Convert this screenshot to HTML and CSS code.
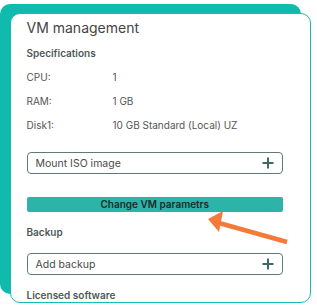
FILE: index.html
```html
<!DOCTYPE html>
<html>
<head>
<meta charset="utf-8">
<link rel="stylesheet" href="styles.css">
</head>
<body>
<div class="card">
  <h1 class="title">VM management</h1>
  <h2 class="section">Specifications</h2>
  <div class="specs">
    <div class="row"><span class="label">CPU:</span><span class="value">1</span></div>
    <div class="row"><span class="label">RAM:</span><span class="value">1 GB</span></div>
    <div class="row"><span class="label">Disk1:</span><span class="value">10 GB Standard (Local) UZ</span></div>
  </div>
  <div class="field iso"><span>Mount ISO image</span>
    <svg class="plus" width="12" height="12" viewBox="0 0 12 12"><path d="M6 0.5V11.5M0.5 6H11.5" stroke="#3f6a64" stroke-width="2" fill="none"/></svg>
  </div>
  <button class="btn">Change VM parametrs</button>
  <h2 class="section backup">Backup</h2>
  <div class="field"><span>Add backup</span>
    <svg class="plus" width="12" height="12" viewBox="0 0 12 12"><path d="M6 0.5V11.5M0.5 6H11.5" stroke="#3f6a64" stroke-width="2" fill="none"/></svg>
  </div>
  <h2 class="section licensed">Licensed software</h2>
</div>
<svg class="arrow" width="317" height="306" viewBox="0 0 317 306">
  <line x1="287" y1="242" x2="219" y2="223" stroke="#f47a3a" stroke-width="4.5"/>
  <polygon points="208,219 223,211 219,232" fill="#f47a3a"/>
</svg>
</body>
</html>
```
FILE: styles.css
```css
html, body {
  margin: 0;
  padding: 0;
  background: #ffffff;
}
body {
  width: 317px;
  height: 306px;
  overflow: hidden;
  position: relative;
  font-family: Inter, "Noto Sans", sans-serif;
}
.card {
  box-sizing: border-box;
  margin: 13px 0 0 10px;
  width: 301px;
  height: 290px;
  border: 1.5px solid #16bcae;
  border-radius: 10px;
  background: #ffffff;
  box-shadow: -10px -9px 0 0 #10bbad;
  padding: 3px 27px 0 15.5px;
  overflow: hidden;
}
.title {
  margin: 0;
  font-size: 14px;
  font-weight: 400;
  line-height: 22px;
  color: #444;
}
.section {
  margin: 0;
  font-size: 10px;
  font-weight: 600;
  line-height: 14px;
  color: #4d5957;
}
.title + .section {
  margin-top: 7px;
}
.specs {
  margin-top: 5px;
}
.row {
  display: flex;
  height: 24px;
  align-items: center;
  font-size: 10px;
  color: #555;
}
.label {
  width: 86px;
}
.field {
  box-sizing: border-box;
  display: flex;
  align-items: center;
  justify-content: space-between;
  height: 22px;
  border: 1px solid #5f7975;
  border-radius: 4px;
  padding: 0 8px 0 8px;
  font-size: 10.5px;
  color: #4a4a4a;
}
.iso {
  margin-top: 15px;
}
.plus {
  display: block;
}
.btn {
  display: block;
  box-sizing: border-box;
  width: 100%;
  height: 15px;
  margin-top: 23px;
  border: none;
  border-radius: 2px;
  background: #2bb4a7;
  font-family: Inter, "Noto Sans", sans-serif;
  font-size: 10px;
  font-weight: 600;
  color: #1d2b29;
  padding: 0;
  line-height: 15px;
}
.backup {
  margin-top: 13px;
  margin-bottom: 14px;
}
.licensed {
  margin-top: 13px;
}
.arrow {
  position: absolute;
  left: 0;
  top: 0;
  pointer-events: none;
}
```
